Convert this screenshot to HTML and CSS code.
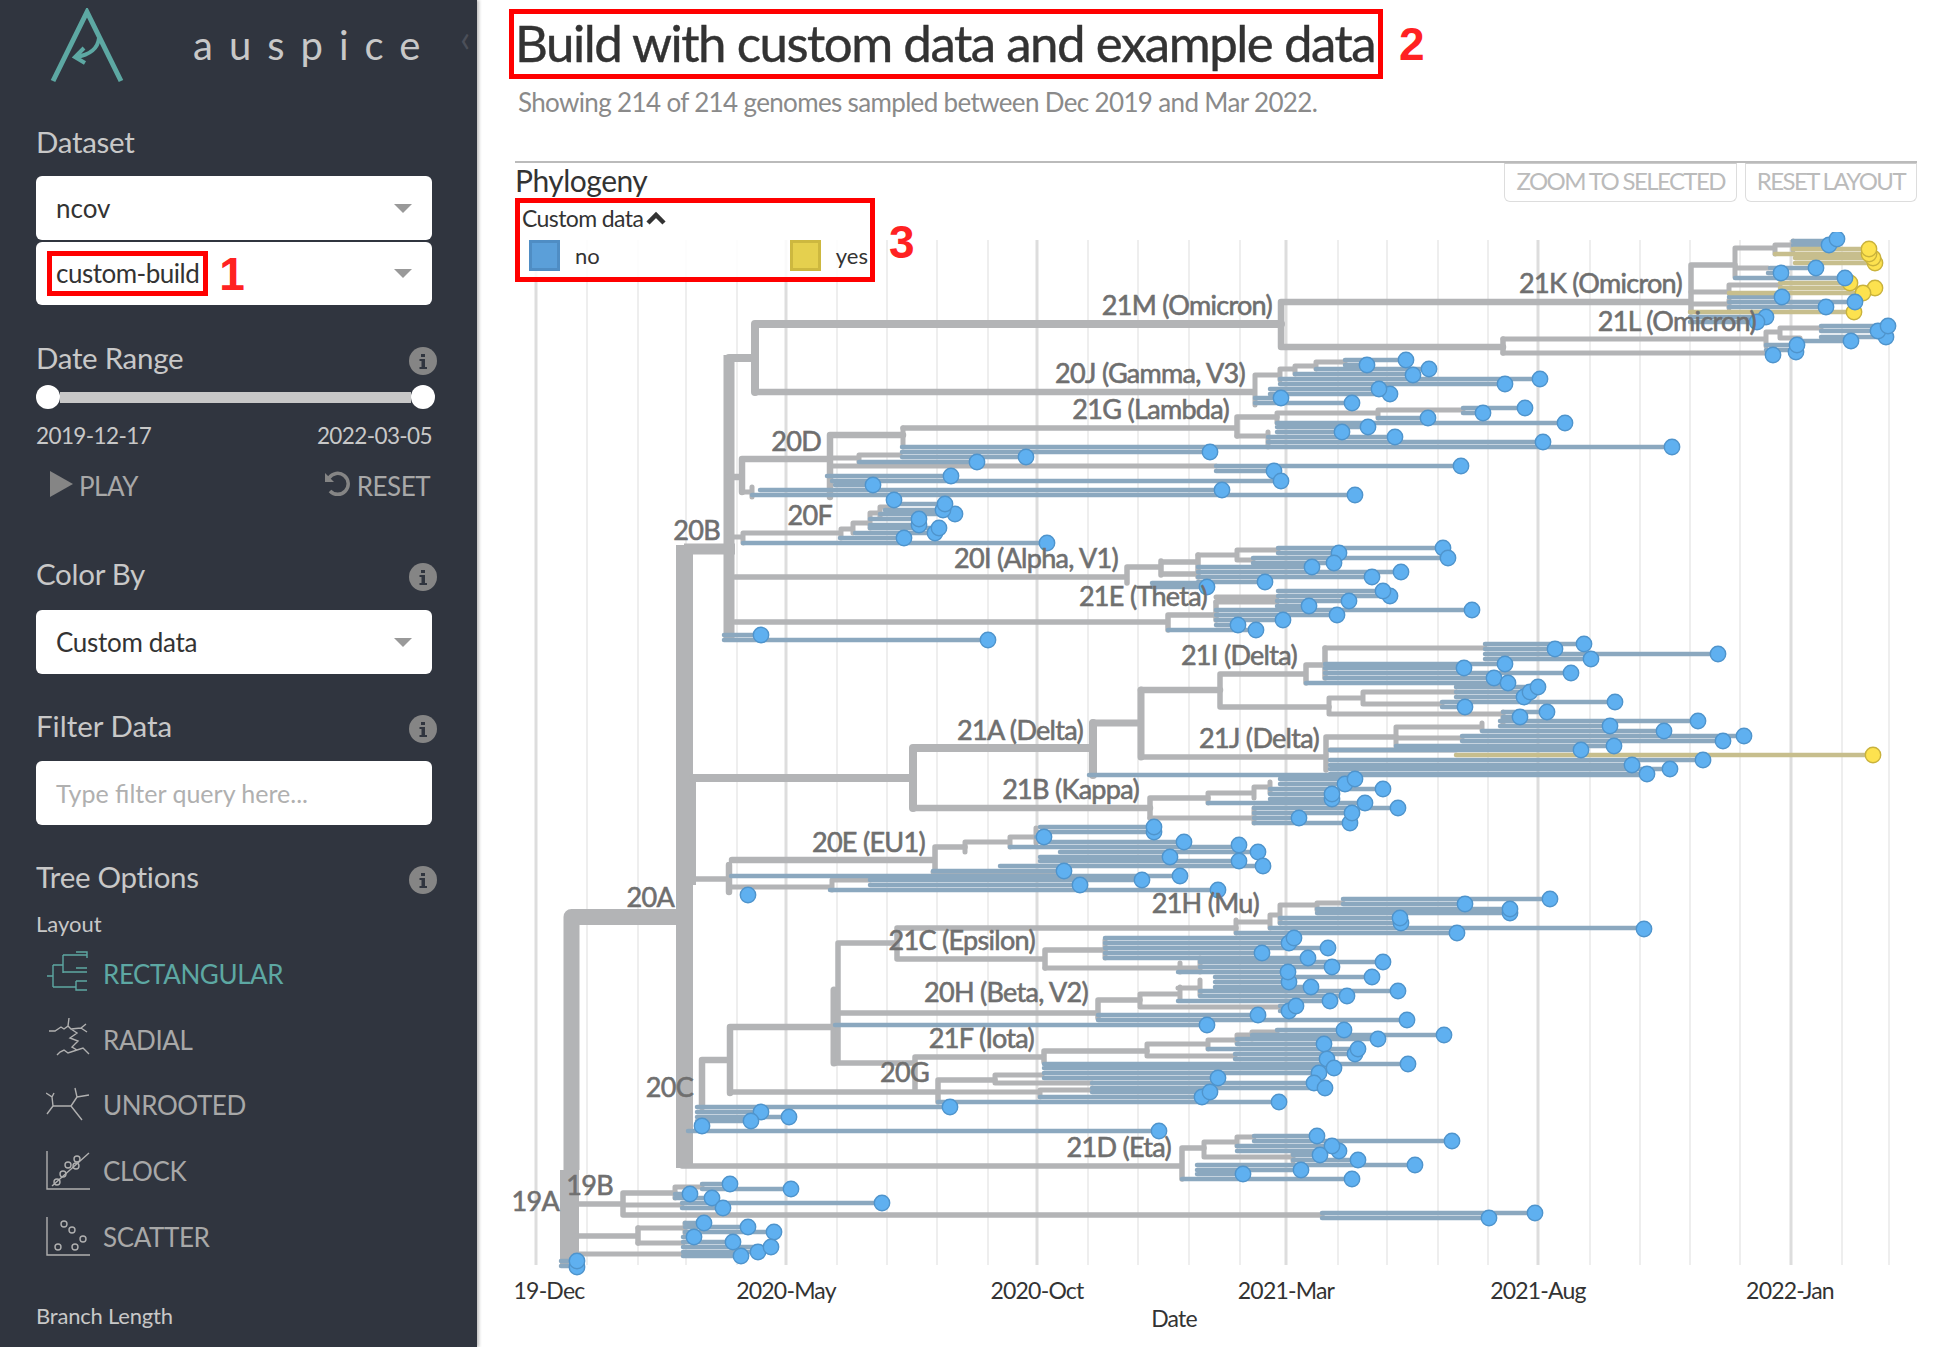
FILE: index.html
```html
<!DOCTYPE html>
<html lang="en">
<head>
  <meta charset="UTF-8" />
  <title>auspice</title>
  <link rel="stylesheet" href="styles.css">
</head>
<body>
  <aside class="sidebar">
    <div class="brand">
      <svg class="brand-logo" width="80" height="76" viewBox="47 8 80 76" aria-hidden="true">
        <path class="logo-a" d="M53 81 87 12l34 69"/>
        <path class="logo-arrow" d="M99 38c-1 10-9 17-23 19M84 48l-9 9 10 6"/>
      </svg>
      <span class="brand-name">auspice</span>
      <span class="collapse">&#8249;</span>
    </div>

    <h3 class="heading heading-dataset">Dataset</h3>
    <div class="select select-first"><span>ncov</span><i class="caret"></i></div>
    <div class="select select-second">
      <span class="marked-text">custom-build</span><span class="marker marker-one">1</span><i class="caret"></i>
    </div>

    <div class="heading heading-date">Date Range
      <svg class="info" viewBox="0 0 28 28"><circle cx="14" cy="14" r="14"/><path d="M12 7h4v3h-4zM10.500 12h5.500v8h2v2h-7.500v-2h2v-6h-2z"/></svg>
    </div>
    <div class="slider"><i class="knob"></i><i class="track"></i><i class="knob"></i></div>
    <div class="date-row"><span>2019-12-17</span><span>2022-03-05</span></div>
    <div class="play-row">
      <span class="play-btn"><svg width="23" height="26" viewBox="0 0 23 26"><path d="M0 0l23 13L0 26z"/></svg>PLAY</span>
      <span class="play-btn"><svg class="reset-icon" width="27" height="26" viewBox="0 0 27 26"><path d="M5 7a10.500 10.500 0 1 1 1 13"/><path class="reset-head" d="M1 2v9h9z"/></svg>RESET</span>
    </div>

    <div class="heading heading-color">Color By
      <svg class="info" viewBox="0 0 28 28"><circle cx="14" cy="14" r="14"/><path d="M12 7h4v3h-4zM10.500 12h5.500v8h2v2h-7.500v-2h2v-6h-2z"/></svg>
    </div>
    <div class="select select-color"><span>Custom data</span><i class="caret"></i></div>

    <div class="heading heading-filter">Filter Data
      <svg class="info" viewBox="0 0 28 28"><circle cx="14" cy="14" r="14"/><path d="M12 7h4v3h-4zM10.500 12h5.500v8h2v2h-7.500v-2h2v-6h-2z"/></svg>
    </div>
    <div class="select filter-input"><span>Type filter query here...</span></div>

    <div class="heading heading-tree">Tree Options
      <svg class="info" viewBox="0 0 28 28"><circle cx="14" cy="14" r="14"/><path d="M12 7h4v3h-4zM10.500 12h5.500v8h2v2h-7.500v-2h2v-6h-2z"/></svg>
    </div>
    <div class="small-heading">Layout</div>
    <ul class="layouts">
      <li class="layout active">
        <svg class="layout-icon" viewBox="0 0 46 46"><path d="M1 25h6M7 14v22M7 14h10M17 4v18M17 4h24M30 1h11v6M17 21h24M30 17h11M7 36h23M30 30v9h11M30 30h11"/></svg>
        RECTANGULAR
      </li>
      <li class="layout">
        <svg class="layout-icon" viewBox="0 6 46 46"><path d="M3 20h6l6-4 3 2 4-3 1-8M22 15l3 3 10-1 5-4M25 18l6 4-7 5 8 3-6 6 5 3M31 39l-9 3-4-3-4 2-3 3M31 39l6-2 6 6M35 17l6 4"/></svg>
        RADIAL
      </li>
      <li class="layout">
        <svg class="layout-icon" viewBox="0 0 46 46"><path d="M7 24h18M7 24 6 15 0 11M6 15l2-4M7 24 1 32M25 24l6-9-2-9M31 15l12-2M25 24l11 14"/></svg>
        UNROOTED
      </li>
      <li class="layout">
        <svg class="layout-icon" viewBox="0 0 46 46"><path d="M1 3v38h43M6 38 43 5"/><circle cx="11" cy="34" r="3"/><circle cx="17" cy="26" r="3"/><circle cx="22" cy="17" r="3"/><circle cx="31" cy="11" r="3"/><circle cx="30" cy="18" r="3"/></svg>
        CLOCK
      </li>
      <li class="layout">
        <svg class="layout-icon" viewBox="0 0 46 46"><path d="M1 3v38h43"/><circle cx="18" cy="10" r="3"/><circle cx="26" cy="16" r="3"/><circle cx="37" cy="25" r="3"/><circle cx="29" cy="33" r="3"/><circle cx="12" cy="33" r="3"/></svg>
        SCATTER
      </li>
    </ul>
    <div class="small-heading branch-length">Branch Length</div>
  </aside>

  <main class="main">
    <div class="title-row">
      <h1 class="title">Build with custom data and example data</h1>
      <span class="marker marker-two">2</span>
    </div>
    <p class="byline">Showing 214 of 214 genomes sampled between Dec 2019 and Mar 2022.</p>

    <section class="panel">
      <div class="panel-head">
        <h2 class="panel-title">Phylogeny</h2>
        <div class="panel-buttons">
          <span class="panel-btn">ZOOM TO SELECTED</span>
          <span class="panel-btn">RESET LAYOUT</span>
        </div>
      </div>

      <div class="legend">
        <div class="legend-title">Custom data
          <svg width="20" height="14" viewBox="0 0 20 14"><path d="M2 12l8-8 8 8"/></svg>
        </div>
        <div class="legend-items">
          <span class="legend-item"><i class="swatch swatch-no"></i>no</span>
          <span class="legend-item"><i class="swatch swatch-yes"></i>yes</span>
        </div>
      </div>
      <span class="marker marker-three">3</span>

      <svg class="tree" width="1440" height="1105" viewBox="505 232 1440 1105">
        <g class="grid-minor">
          <path d="M587 240V1265M638 240V1265M686 240V1265M737 240V1265M837 240V1265M887 240V1265M937 240V1265M988 240V1265M1088 240V1265M1138 240V1265M1189 240V1265M1240 240V1265M1338 240V1265M1387 240V1265M1438 240V1265M1488 240V1265M1590 240V1265M1640 240V1265M1690 240V1265M1740 240V1265M1842 240V1265M1889 240V1265"/>
        </g>
        <g class="grid-major">
          <path d="M536 240V1265M786 240V1265M1037 240V1265M1286 240V1265M1538 240V1265M1791 240V1265"/>
        </g>

        <g class="branches">
          <path class="b19" d="M569.500 1170V1266"/>
          <path class="b17" d="M684.500 545V1168"/>
          <path class="b20" d="M686 778V885"/>
          <path class="b16" d="M692 917H571.500V1170"/>
          <path class="b11" d="M684 549H735M729 355V640"/>
          <path class="b8" d="M729 358H755M755 324V392M755 324H1281M693 778H913M913 748V808M913 748H1093M1093 723V775"/>
          <path class="b7" d="M1093 723H1141M1141 690V757M834 990V1063"/>
          <path class="b6" d="M755 392H1253M1281 302V347M1281 302H1689M1281 347H1503M742 459V492M742 459H830M729 477H742M830 435V497M830 435H903M913 808H1150M1141 690H1220M729 865V892M732 860H933M730 1027V1093M730 1027H835M702 1060H730M702 1060V1107"/>
          <path class="b5" d="M735 577H1127M735 622H1167M1127 567V583M1127 567H1161M1161 561V575M1161 562H1198M1161 574H1198M1198 555V577M1168 615V630M1168 615H1216M1216 602V620M1141 757H1325M1220 674V707M1220 674H1306M1306 665V683M1325 648V678M1306 665H1325M1220 707H1329M1326 737V770M1326 737H1396M1150 798V818M1150 798H1208M693 879H729M935 847V872M935 847H965M838 943V1063M838 943H897M897 928V959M897 928H1236M897 959H1045M1045 950V968M1045 950H1105M835 1013H1098M1098 1000V1018M1098 1000H1140M835 1063H915M915 1057V1092M915 1057H1044M1044 1051V1062M1044 1051H1147M730 1092H937M938 1080V1102M938 1080H995M682 1166H1180M1182 1148V1179M1182 1148H1204M579 1204H623M623 1193V1215M623 1193H675M623 1215H1322M575 1236H638M638 1228V1243M1691 265V312M1691 265H1735M903 428H1237M1503 339V353M1237 417V436M1237 417H1277"/>
          <path class="b4" d="M1735 248V277M1735 248H1775M1775 245V254M1775 245H1793M1793 241V250M1735 268H1768M1691 292H1729M1729 285V293M1729 285H1780M1691 304H1729M1729 300V308M1503 339H1766M1503 353H1773M1766 332V346M1766 332H1780M1780 328V338M1780 328H1821M1780 338H1800M1255 375V405M1255 375H1280M1280 369V380M1280 369H1295M1295 366V374M1295 366H1316M1316 362V369M1316 362H1345M1277 413V423M1277 413H1378M1378 410V418M1378 410H1463M1237 436H1268M1268 432V447M903 428V447M859 455V462M830 458H859M859 455H900M830 466H1216M752 487V497M742 492H752M743 533V543M729 537H743M743 533H841M841 529V538M841 529H853M853 523V533M853 523H870M870 513V528M870 513H880M880 507V518M880 507H890M1198 555H1237M1237 550V560M1237 550H1278M1237 560H1253M1216 602H1277M1216 597H1277M1325 648H1485M1329 698V714M1329 698H1363M1363 692V704M1363 692H1456M1363 704H1442M1329 714H1500M1503 712V723M1396 727V746M1396 727H1482M1482 723V730M1396 738H1462M1330 750H1456M1208 793V803M1208 793H1254M1254 787V798M1254 787H1270M1270 782V793M1150 818H1254M1254 808V823M965 842V852M965 842H1010M1010 837V847M1010 837H1035M1036 828V843M933 872H1064M732 887H832M832 880V890M832 880H870M1236 920V933M1236 922H1270M1270 915V928M1270 915H1280M1280 905V923M1280 905H1317M1317 903V910M1317 903H1343M1180 963V972M1105 940V958M1045 968H1178M1178 968H1200M1200 958V972M1140 994V1007M1140 994H1180M1180 987V1000M1178 988H1200M1200 980V995M1140 1007H1280M1147 1044V1056M1147 1044H1208M1208 1040V1049M1208 1040H1237M1237 1035V1043M1237 1035H1252M1252 1032V1039M1252 1032H1277M1147 1056H1235M995 1075V1083M995 1075H1042M995 1083H1092M938 1092H1040M1040 1090V1097M1040 1090H1092M1204 1142V1157M1204 1142H1237M1237 1137V1146M1237 1137H1254M1204 1157H1293M1293 1152V1161M675 1187V1198M675 1187H702M623 1205H682M638 1228H685M685 1223V1233M638 1243H683M575 1254H683"/>
          <path class="blue" d="M1729 297H1782M1729 302H1855M1729 307H1826M1735 278H1845M1793 241H1837M1793 245H1829M1770 268H1816M1768 273H1781M1690 317H1766M1690 322H1757M1821 326H1888M1821 331H1878M1821 337H1886M1800 341H1851M1766 345H1797M1766 350H1796M1345 360H1406M1345 365H1367M1316 369H1429M1295 374H1413M1280 379H1540M1280 384H1505M1270 389H1379M1270 394H1390M1255 398H1281M1255 403H1352M1463 408H1525M1463 413H1483M1378 418H1428M1277 423H1565M1277 427H1368M1277 432H1342M1268 437H1395M1268 442H1543M902 447H1672M902 452H1210M902 457H1026M859 462H977M827 476H951M832 481H1281M835 485H873M760 490H1222M752 495H1355M1216 466H1461M1216 471H1274M890 504H945M885 510H943M880 514H955M870 519H919M870 525H919M870 528H939M855 533H935M840 538H904M743 543H1047M1278 548H1443M1278 553H1339M1253 558H1448M1253 563H1334M1198 567H1312M1198 572H1401M1198 577H1372M1198 582H1265M1152 587H1207M1152 583H1207M1278 591H1383M1278 596H1390M1277 601H1349M1277 606H1309M1216 610H1472M1216 615H1337M1216 620H1283M1216 625H1238M1168 630H1256M724 635H761M724 640H988M1485 644H1584M1485 649H1555M1485 654H1718M1485 659H1591M1325 664H1505M1325 668H1464M1325 673H1571M1325 678H1494M1306 683H1508M1456 687H1538M1456 692H1530M1456 697H1524M1442 702H1615M1442 707H1465M1503 712H1547M1503 717H1520M1500 721H1698M1500 726H1610M1482 731H1664M1462 736H1744M1462 741H1723M1396 746H1614M1330 750H1581M1330 760H1703M1330 765H1632M1330 769H1670M1330 774H1647M1089 775H1647M1280 779H1355M1280 784H1345M1270 789H1383M1270 794H1332M1270 799H1332M1208 803H1365M1254 808H1398M1254 813H1352M1254 818H1299M1254 823H1350M1040 827H1154M1040 832H1154M1036 837H1044M1040 842H1184M1010 847H1239M1060 852H1258M1040 857H1170M1040 861H1239M1000 866H1263M933 871H1064M731 876H1180M870 880H1142M870 885H1080M830 890H1218M1343 899H1550M1343 904H1465M1317 909H1510M1317 913H1510M1280 918H1400M1280 923H1401M1270 928H1644M1236 933H1457M1105 938H1294M1105 943H1289M1105 948H1328M1105 953H1262M1105 958H1308M1200 962H1383M1200 967H1332M1178 972H1288M1215 977H1372M1215 982H1289M1215 987H1311M1200 991H1398M1200 996H1347M1178 1001H1330M1280 1006H1296M1280 1011H1289M1098 1015H1258M1098 1020H1407M835 1025H1207M1277 1030H1344M1252 1035H1444M1237 1039H1378M1237 1044H1324M1208 1049H1358M1235 1054H1355M1235 1059H1327M1044 1064H1408M1044 1068H1334M1044 1073H1319M1044 1078H1218M1092 1083H1314M1092 1088H1325M1092 1092H1210M1040 1097H1202M938 1102H1279M697 1107H950M697 1112H761M697 1117H789M697 1121H751M697 1126H702M688 1131H1159M1254 1136H1317M1254 1141H1452M1237 1146H1332M1237 1151H1339M1293 1155H1320M1293 1160H1358M1197 1165H1415M1197 1170H1301M1197 1174H1243M1182 1179H1352M702 1184H730M702 1189H791M675 1194H690M675 1198H712M682 1203H882M682 1208H723M1322 1213H1535M1322 1218H1489M685 1223H704M685 1227H748M685 1232H774M683 1237H694M683 1242H733M683 1247H771M683 1252H758M683 1256H741M561 1261H577M561 1266H577"/>
          <path class="yellow" d="M1793 249H1869M1775 254H1869M1795 258H1873M1795 263H1875M1780 283H1850M1780 288H1875M1729 293H1863M1690 312H1854M1456 755H1873"/>
        </g>

        <g class="tips tips-yes">
          <circle cx="1875" cy="263"/><circle cx="1873" cy="258"/><circle cx="1869" cy="254"/><circle cx="1869" cy="249"/><circle cx="1850" cy="283"/><circle cx="1875" cy="288"/><circle cx="1863" cy="293"/><circle cx="1854" cy="312"/><circle cx="1873" cy="755"/>
        </g>
        <g class="tips tips-no">
          <circle cx="1829" cy="245"/><circle cx="1837" cy="239"/><circle cx="1816" cy="268"/><circle cx="1781" cy="273"/><circle cx="1845" cy="278"/><circle cx="1782" cy="297"/><circle cx="1855" cy="302"/><circle cx="1826" cy="307"/><circle cx="1766" cy="317"/><circle cx="1757" cy="322"/>
          <circle cx="1886" cy="337"/><circle cx="1878" cy="331"/><circle cx="1888" cy="326"/><circle cx="1851" cy="341"/><circle cx="1796" cy="352"/><circle cx="1797" cy="345"/><circle cx="1773" cy="355"/>
          <circle cx="1406" cy="360"/><circle cx="1367" cy="365"/><circle cx="1429" cy="369"/><circle cx="1413" cy="375"/><circle cx="1540" cy="379"/><circle cx="1505" cy="384"/><circle cx="1390" cy="394"/><circle cx="1379" cy="389"/><circle cx="1281" cy="398"/><circle cx="1352" cy="403"/>
          <circle cx="1525" cy="408"/><circle cx="1483" cy="413"/><circle cx="1428" cy="418"/><circle cx="1565" cy="423"/><circle cx="1368" cy="427"/><circle cx="1342" cy="432"/><circle cx="1395" cy="437"/><circle cx="1543" cy="442"/><circle cx="1672" cy="447"/><circle cx="1210" cy="452"/><circle cx="1026" cy="457"/><circle cx="977" cy="462"/>
          <circle cx="1461" cy="466"/><circle cx="1274" cy="471"/><circle cx="951" cy="476"/><circle cx="1281" cy="481"/><circle cx="873" cy="485"/><circle cx="1222" cy="490"/><circle cx="1355" cy="495"/>
          <circle cx="894" cy="500"/><circle cx="955" cy="514"/><circle cx="943" cy="510"/><circle cx="945" cy="504"/><circle cx="919" cy="525"/><circle cx="919" cy="519"/><circle cx="935" cy="533"/><circle cx="939" cy="528"/><circle cx="904" cy="538"/><circle cx="1047" cy="543"/>
          <circle cx="1443" cy="548"/><circle cx="1448" cy="558"/><circle cx="1339" cy="553"/><circle cx="1334" cy="563"/><circle cx="1312" cy="567"/><circle cx="1401" cy="572"/><circle cx="1372" cy="577"/><circle cx="1265" cy="582"/><circle cx="1207" cy="587"/>
          <circle cx="1390" cy="596"/><circle cx="1383" cy="591"/><circle cx="1349" cy="601"/><circle cx="1309" cy="606"/><circle cx="1472" cy="610"/><circle cx="1337" cy="615"/><circle cx="1283" cy="620"/><circle cx="1238" cy="625"/><circle cx="1256" cy="630"/>
          <circle cx="761" cy="635"/><circle cx="988" cy="640"/>
          <circle cx="1584" cy="644"/><circle cx="1555" cy="649"/><circle cx="1718" cy="654"/><circle cx="1591" cy="659"/><circle cx="1505" cy="664"/><circle cx="1464" cy="668"/><circle cx="1571" cy="673"/><circle cx="1494" cy="678"/><circle cx="1508" cy="683"/>
          <circle cx="1524" cy="697"/><circle cx="1530" cy="692"/><circle cx="1538" cy="687"/><circle cx="1615" cy="702"/><circle cx="1465" cy="707"/><circle cx="1547" cy="712"/><circle cx="1520" cy="717"/>
          <circle cx="1698" cy="721"/><circle cx="1610" cy="726"/><circle cx="1664" cy="731"/><circle cx="1744" cy="736"/><circle cx="1723" cy="741"/><circle cx="1614" cy="746"/><circle cx="1581" cy="750"/><circle cx="1703" cy="760"/><circle cx="1632" cy="765"/><circle cx="1670" cy="769"/><circle cx="1647" cy="774"/>
          <circle cx="1345" cy="784"/><circle cx="1355" cy="779"/><circle cx="1383" cy="789"/><circle cx="1332" cy="799"/><circle cx="1332" cy="794"/><circle cx="1365" cy="803"/><circle cx="1398" cy="808"/><circle cx="1350" cy="823"/><circle cx="1352" cy="813"/><circle cx="1299" cy="818"/>
          <circle cx="1154" cy="832"/><circle cx="1154" cy="827"/><circle cx="1044" cy="837"/><circle cx="1184" cy="842"/><circle cx="1239" cy="845"/><circle cx="1258" cy="852"/><circle cx="1170" cy="857"/><circle cx="1239" cy="861"/><circle cx="1263" cy="866"/><circle cx="1064" cy="871"/><circle cx="1180" cy="876"/><circle cx="1142" cy="880"/><circle cx="1080" cy="885"/><circle cx="1218" cy="890"/><circle cx="748" cy="895"/>
          <circle cx="1550" cy="899"/><circle cx="1465" cy="904"/><circle cx="1510" cy="913"/><circle cx="1510" cy="909"/><circle cx="1401" cy="923"/><circle cx="1400" cy="918"/><circle cx="1644" cy="929"/><circle cx="1457" cy="933"/>
          <circle cx="1289" cy="943"/><circle cx="1294" cy="938"/><circle cx="1328" cy="948"/><circle cx="1262" cy="953"/><circle cx="1308" cy="958"/><circle cx="1383" cy="962"/><circle cx="1332" cy="967"/><circle cx="1289" cy="982"/><circle cx="1288" cy="972"/><circle cx="1372" cy="977"/><circle cx="1311" cy="987"/><circle cx="1398" cy="991"/><circle cx="1347" cy="996"/><circle cx="1330" cy="1001"/><circle cx="1289" cy="1011"/><circle cx="1296" cy="1006"/><circle cx="1258" cy="1015"/><circle cx="1407" cy="1020"/><circle cx="1207" cy="1025"/>
          <circle cx="1344" cy="1030"/><circle cx="1444" cy="1035"/><circle cx="1378" cy="1039"/><circle cx="1324" cy="1044"/><circle cx="1355" cy="1054"/><circle cx="1358" cy="1049"/><circle cx="1327" cy="1059"/><circle cx="1408" cy="1064"/><circle cx="1334" cy="1068"/><circle cx="1319" cy="1073"/><circle cx="1218" cy="1078"/><circle cx="1314" cy="1083"/><circle cx="1325" cy="1088"/><circle cx="1202" cy="1097"/><circle cx="1210" cy="1092"/><circle cx="1279" cy="1102"/><circle cx="950" cy="1107"/>
          <circle cx="761" cy="1112"/><circle cx="789" cy="1117"/><circle cx="751" cy="1121"/><circle cx="702" cy="1126"/><circle cx="1159" cy="1131"/>
          <circle cx="1317" cy="1136"/><circle cx="1452" cy="1141"/><circle cx="1339" cy="1151"/><circle cx="1332" cy="1146"/><circle cx="1320" cy="1155"/><circle cx="1358" cy="1160"/><circle cx="1415" cy="1165"/><circle cx="1301" cy="1170"/><circle cx="1243" cy="1174"/><circle cx="1352" cy="1179"/>
          <circle cx="730" cy="1184"/><circle cx="791" cy="1189"/><circle cx="690" cy="1194"/><circle cx="712" cy="1198"/><circle cx="882" cy="1203"/><circle cx="723" cy="1208"/><circle cx="1535" cy="1213"/><circle cx="1489" cy="1218"/>
          <circle cx="704" cy="1223"/><circle cx="748" cy="1227"/><circle cx="774" cy="1232"/><circle cx="694" cy="1237"/><circle cx="733" cy="1242"/><circle cx="741" cy="1256"/><circle cx="758" cy="1252"/><circle cx="771" cy="1247"/>
          <circle cx="577" cy="1267"/><circle cx="577" cy="1261"/>
        </g>

        <g class="clade-labels">
          <text x="1682" y="293">21K (Omicron)</text>
          <text x="1272" y="315">21M (Omicron)</text>
          <text x="1756" y="331">21L (Omicron)</text>
          <text x="1245" y="383">20J (Gamma, V3)</text>
          <text x="1229" y="419">21G (Lambda)</text>
          <text x="821" y="451">20D</text>
          <text x="832" y="525">20F</text>
          <text x="720" y="540">20B</text>
          <text x="1118" y="568">20I (Alpha, V1)</text>
          <text x="1207" y="606">21E (Theta)</text>
          <text x="1297" y="665">21I (Delta)</text>
          <text x="1083" y="740">21A (Delta)</text>
          <text x="1319" y="748">21J (Delta)</text>
          <text x="1139" y="799">21B (Kappa)</text>
          <text x="925" y="852">20E (EU1)</text>
          <text x="674" y="907">20A</text>
          <text x="1259" y="913">21H (Mu)</text>
          <text x="1035" y="950">21C (Epsilon)</text>
          <text x="1088" y="1002">20H (Beta, V2)</text>
          <text x="1034" y="1048">21F (Iota)</text>
          <text x="929" y="1082">20G</text>
          <text x="693" y="1097">20C</text>
          <text x="1171" y="1157">21D (Eta)</text>
          <text x="613" y="1195">19B</text>
          <text x="559" y="1211">19A</text>
        </g>

        <g class="axis-labels">
          <text x="549" y="1299">19-Dec</text>
          <text x="786" y="1299">2020-May</text>
          <text x="1037" y="1299">2020-Oct</text>
          <text x="1286" y="1299">2021-Mar</text>
          <text x="1538" y="1299">2021-Aug</text>
          <text x="1790" y="1299">2022-Jan</text>
          <text x="1174" y="1327">Date</text>
        </g>
      </svg>
    </section>
  </main>
</body>
</html>
```

FILE: styles.css
```css
* { box-sizing: border-box; }
html, body {
  margin: 0;
  height: 1347px;
  overflow: hidden;
}
body {
  display: flex;
  background: #fff;
  font-family: Lato, "Open Sans", sans-serif;
  color: #333;
}
h1, h2, h3, p, ul { margin: 0; padding: 0; font-weight: 400; }

/* sidebar */
.sidebar {
  position: relative;
  flex: 0 0 477px;
  height: 1347px;
  padding-left: 36px;
  padding-right: 45px;
  background: #30353f;
  color: #c8c8c8;
  box-shadow: 2px 0 3px rgba(0,0,0,0.25);
  overflow: hidden;
}
.brand {
  display: flex;
  align-items: flex-start;
  height: 124px;
  padding-top: 8px;
}
.brand-logo { margin-left: 11px; flex: none; }
.logo-a { fill: none; stroke: #5da8a3; stroke-width: 5; }
.logo-arrow { fill: none; stroke: #5da8a3; stroke-width: 4; }
.brand-name {
  margin-left: 66px;
  margin-top: 15px;
  font-size: 40px;
  line-height: 44px;
  letter-spacing: 16px;
  color: #c8c8c8;
}
.collapse {
  position: absolute;
  left: 460px;
  top: 14px;
  font-size: 38px;
  color: #4b4f59;
}

.heading {
  display: flex;
  justify-content: space-between;
  align-items: center;
  height: 36px;
  padding-bottom: 2px;
  font-size: 29.5px;
  letter-spacing: -0.3px;
  color: #c8c8c8;
}
.heading-dataset { margin-bottom: 16px; }
.heading-date { margin-top: 35px; }
.heading-color { margin-bottom: 18px; }
.heading-filter { margin-top: 34px; margin-bottom: 17px; letter-spacing: 0; }
.heading-tree { margin-top: 34px; }
.info {
  width: 28px;
  height: 28px;
  margin-right: -5px;
  margin-top: 8px;
  flex: none;
}
.info circle { fill: #858585; }
.info path { fill: #30353f; }

.select {
  display: flex;
  align-items: center;
  height: 64px;
  padding-left: 20px;
  padding-right: 20px;
  background: #fff;
  border-radius: 6px;
  font-size: 26px;
  color: #333;
}
.select-first { height: 64px; margin-bottom: 2px; }
.select-second { height: 63px; padding-left: 11px; }
.select-color { letter-spacing: -0.3px; }
.caret {
  margin-left: auto;
  border-left: 9px solid transparent;
  border-right: 9px solid transparent;
  border-top: 9px solid #999;
}
.marked-text {
  display: block;
  padding: 2px 4px 2px 4px;
  border: 5px solid #f00;
  line-height: 31px;
  font-size: 26px;
  letter-spacing: -0.5px;
}
.marker {
  font-family: "Liberation Sans", Arial, sans-serif;
  font-weight: 700;
  font-size: 46px;
  color: #f22;
}
.marker-one { margin-left: 11px; line-height: 40px; }

.slider {
  display: flex;
  align-items: center;
  height: 24px;
  margin-top: 9px;
  margin-right: -3px;
}
.knob {
  flex: none;
  width: 24px;
  height: 24px;
  border-radius: 50%;
  background: #fff;
}
.track {
  flex: 1;
  height: 11px;
  background: #c8c8c8;
}
.date-row {
  display: flex;
  justify-content: space-between;
  height: 30px;
  margin-top: 12px;
  font-size: 22.5px;
  line-height: 30px;
  letter-spacing: -0.6px;
}
.play-row {
  display: flex;
  justify-content: space-between;
  align-items: center;
  height: 38px;
  margin-top: 16px;
  margin-bottom: 51px;
  padding-left: 14px;
  padding-right: 2px;
}
.play-btn {
  display: flex;
  align-items: center;
  gap: 6px;
  font-size: 26px;
  letter-spacing: -0.5px;
  color: #a8a8a8;
}
.play-btn svg { margin-top: -4px; }
.play-btn svg path { fill: #858585; }
.play-btn .reset-icon path { fill: none; stroke: #858585; stroke-width: 3.5; }
.play-btn .reset-icon .reset-head { fill: #858585; stroke: none; }

.filter-input { font-size: 25px; color: #b0b0b0; }

.small-heading {
  height: 30px;
  margin-top: 14px;
  font-size: 22px;
  line-height: 30px;
  color: #c8c8c8;
}
.layouts { list-style: none; margin-top: 2px; }
.layout {
  display: flex;
  align-items: center;
  gap: 11px;
  height: 65.8px;
  padding-left: 10px;
  font-size: 26px;
  letter-spacing: -0.4px;
  color: #a8a8a8;
}
.layout.active { color: #5da8a3; }
.layout-icon {
  width: 46px;
  height: 46px;
  flex: none;
  fill: none;
  stroke: #b0b0b0;
  stroke-width: 1.4;
}
.layout.active .layout-icon { stroke: #5da8a3; }
.branch-length { margin-top: 31px; letter-spacing: -0.2px; }

/* main column */
.main {
  flex: 1;
  min-width: 0;
  padding: 9px 28px 0 32px;
}
.title-row {
  display: flex;
  align-items: center;
  gap: 16px;
}
.title {
  height: 70px;
  width: 874px;
  padding-left: 1px;
  border: 5px solid #f00;
  font-size: 51px;
  line-height: 58px;
  letter-spacing: -1.47px;
  -webkit-text-stroke: 0.4px #333;
  white-space: nowrap;
  color: #333;
}
.byline {
  margin-top: 6px;
  margin-left: 9px;
  font-size: 26px;
  line-height: 34px;
  letter-spacing: -0.65px;
  color: #8a8a8a;
}
.panel {
  position: relative;
  margin-top: 42px;
  margin-left: 6px;
  border-top: 2px solid #bbb;
}
.panel-head {
  display: flex;
  justify-content: space-between;
  align-items: flex-start;
  height: 69px;
}
.panel-title {
  margin-top: -2px;
  font-size: 30px;
  line-height: 38px;
  letter-spacing: -0.5px;
  color: #333;
}
.panel-buttons { display: flex; gap: 8px; }
.panel-btn {
  height: 39px;
  padding: 0 11px;
  border: 1.5px solid #ddd;
  border-top-color: #ccc;
  border-radius: 0 0 6px 6px;
  font-size: 24px;
  line-height: 33px;
  letter-spacing: -1.6px;
  color: #bbb;
}
.legend {
  position: absolute;
  z-index: 1;
  left: 0;
  top: 35px;
  width: 360px;
  height: 84px;
  padding: 0 2px;
  border: 5px solid #f00;
  background: rgba(255,255,255,0.85);
}
.legend-title {
  display: flex;
  align-items: center;
  gap: 3px;
  font-size: 23px;
  line-height: 30px;
  letter-spacing: -0.6px;
}
.legend-title svg path { fill: none; stroke: #333; stroke-width: 4.5; }
.legend-items {
  display: flex;
  justify-content: space-between;
  margin-top: 7px;
  padding-left: 7px;
}
.legend-item {
  display: flex;
  align-items: flex-start;
  gap: 15px;
  font-size: 22px;
  line-height: 31px;
}
.swatch {
  width: 31px;
  height: 31px;
  border: 3px solid;
}
.swatch-no { background: #5b9fd9; border-color: #4f8dc4; }
.swatch-yes { background: #e5d04e; border-color: #cdb83f; }
.marker-two { line-height: 50px; }
.marker-three {
  position: absolute;
  z-index: 1;
  left: 374px;
  top: 52px;
}

/* tree */
.tree { display: block; margin-left: -10px; }
.grid-minor path { fill: none; stroke: #eee; stroke-width: 2; }
.grid-major path { fill: none; stroke: #ddd; stroke-width: 3; }
.branches path {
  fill: none;
  stroke: #b3b4b6;
  stroke-linejoin: round;
  stroke-linecap: round;
}
.branches .b20, .branches .b19, .branches .b17, .branches .b16, .branches .b11 { stroke-linecap: butt; }
.b20 { stroke-width: 20; }
.b19 { stroke-width: 19; }
.b17 { stroke-width: 17; }
.b16 { stroke-width: 16; }
.b11 { stroke-width: 11; }
.b8 { stroke-width: 8; }
.b7 { stroke-width: 7; }
.b6 { stroke-width: 6.5; }
.b5 { stroke-width: 5.5; }
.b4 { stroke-width: 5; }
.branches .blue { stroke: #8ba8bf; stroke-width: 4.5; }
.branches .yellow { stroke: #c7be8d; stroke-width: 4.5; }
.tips circle { r: 7.7px; stroke-width: 1.4; }
.tips-no circle { fill: #5fb0f0; stroke: #4f94cc; }
.tips-yes circle { fill: #fde24f; stroke: #c9b23c; }
.clade-labels text {
  font-size: 27px;
  letter-spacing: -0.7px;
  fill: #6f6f6f;
  stroke: #6f6f6f;
  stroke-width: 0.6px;
  text-anchor: end;
}
.axis-labels text {
  font-size: 23px;
  letter-spacing: -0.8px;
  fill: #333;
  text-anchor: middle;
}
```
